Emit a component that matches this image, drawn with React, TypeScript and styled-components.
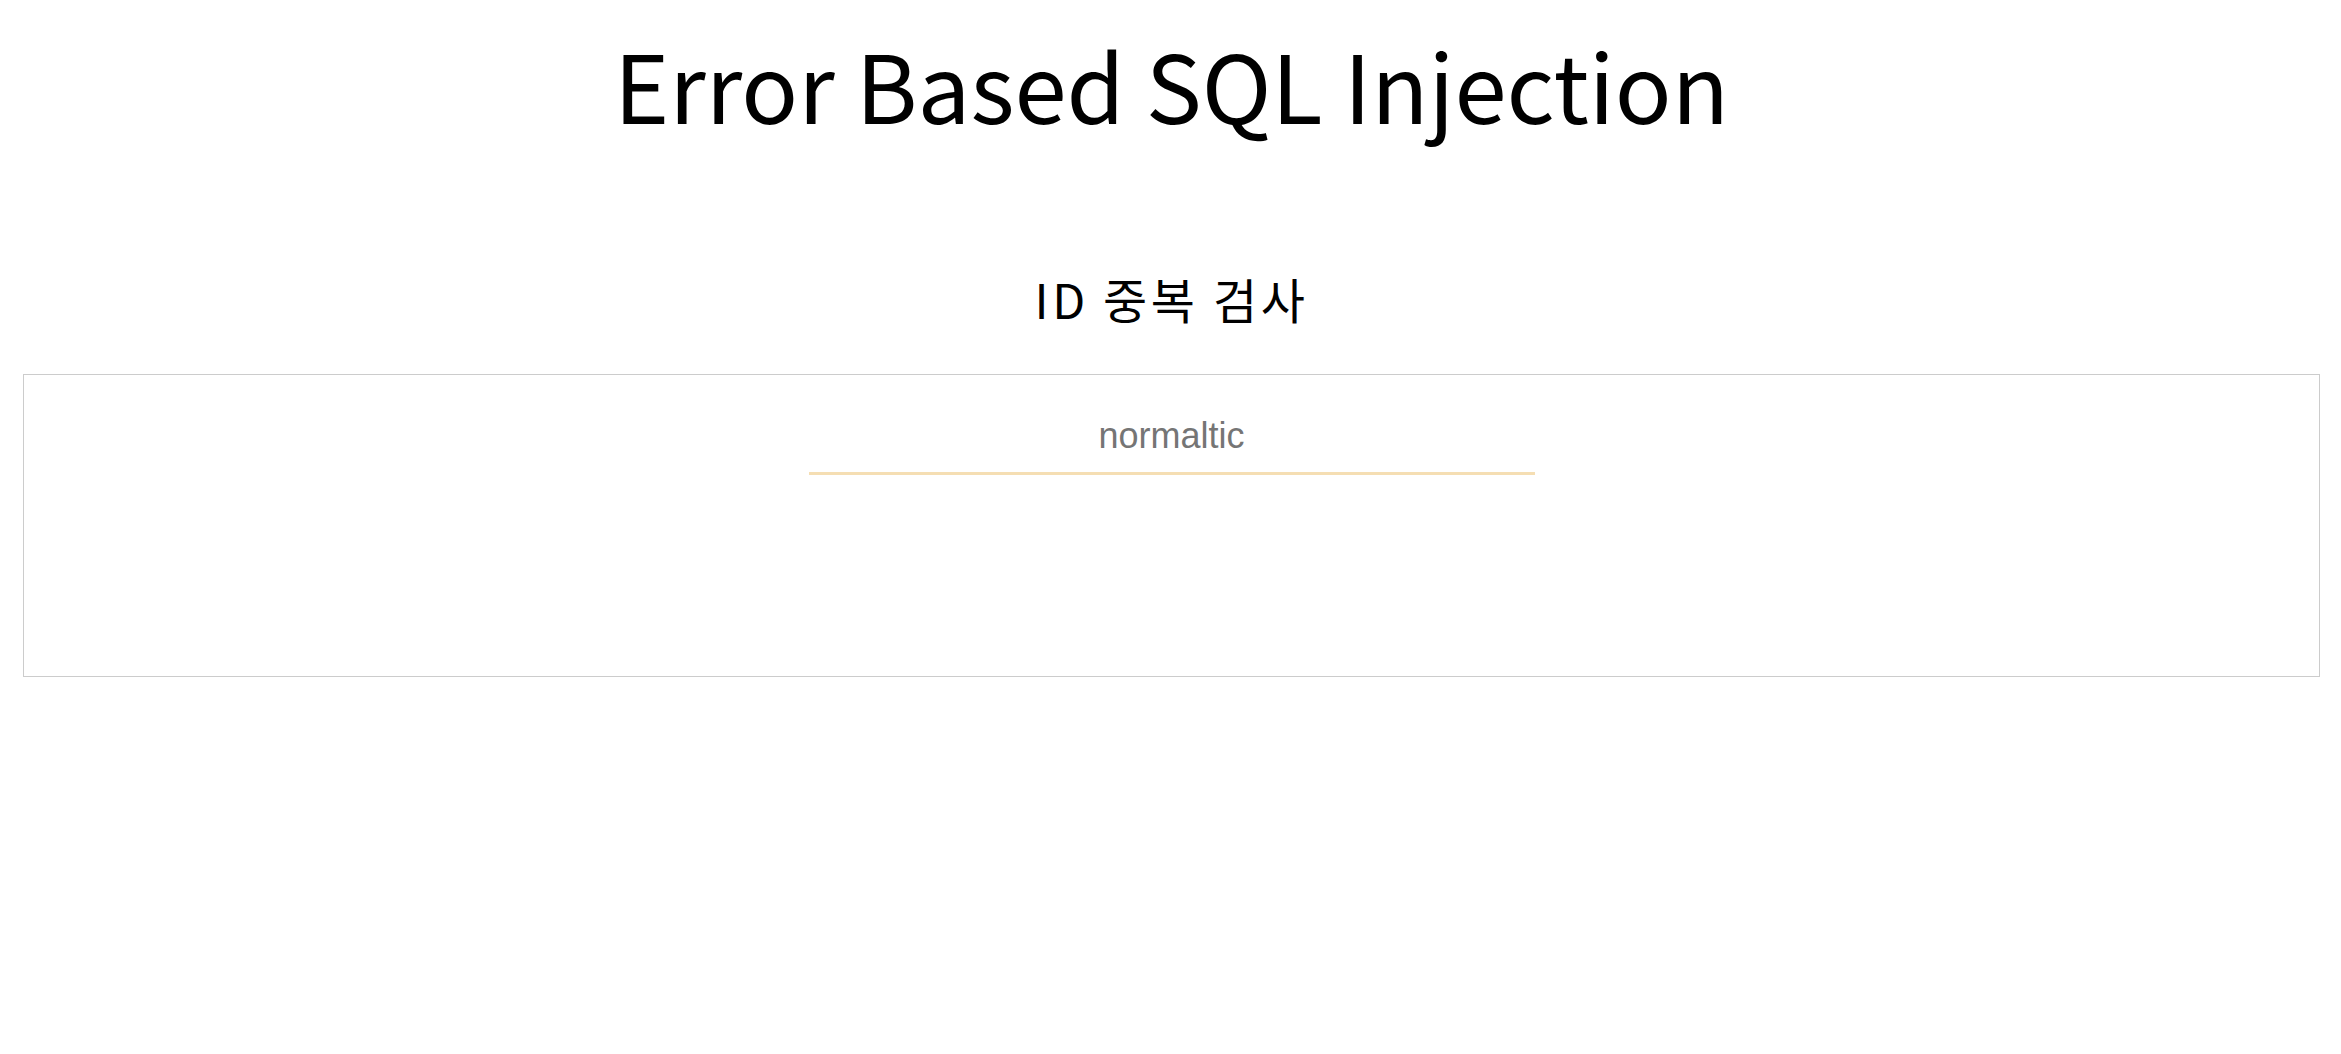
import React from "react";
import styled, { createGlobalStyle } from "styled-components";

const GlobalStyle = createGlobalStyle`
  html, body {
    margin: 0;
    padding: 0;
    background: #ffffff;
  }
  body {
    font-family: "Noto Sans CJK KR", "Noto Sans", sans-serif;
    color: #000000;
  }
`;

const Page = styled.div`
  display: flex;
  flex-direction: column;
  padding: 27px 21px 0 23px;
`;

const Title = styled.h1`
  margin: 0;
  font-family: "Noto Sans CJK KR", "Noto Sans", sans-serif;
  font-size: 94px;
  font-weight: 400;
  line-height: 1.2;
  text-align: center;
`;

const Subtitle = styled.h2`
  margin: 130px 0 0;
  font-family: "Noto Sans CJK KR", "Noto Sans", sans-serif;
  font-size: 48px;
  font-weight: 400;
  line-height: 1.2;
  letter-spacing: 3.6px;
  text-align: center;
`;

const Panel = styled.form`
  margin-top: 47px;
  border: 1px solid #cccccc;
  height: 260px;
  padding-top: 41px;
  display: flex;
  flex-direction: column;
  align-items: center;
`;

const IdInput = styled.input`
  box-sizing: border-box;
  width: 726px;
  height: 59px;
  padding: 0 0 16px;
  border: none;
  border-bottom: 3px solid #f5deb3;
  outline: none;
  background: transparent;
  font-family: "Liberation Sans", Arial, sans-serif;
  font-size: 36px;
  line-height: 40px;
  text-align: center;
  color: #000;

  &::placeholder {
    color: #757575;
  }
`;

export default function App() {
  return (
    <>
      <GlobalStyle />
      <Page>
        <Title>Error Based SQL Injection</Title>
        <Subtitle>ID 중복 검사</Subtitle>
        <Panel onSubmit={(e) => e.preventDefault()}>
          <IdInput type="text" name="id" placeholder="normaltic" />
        </Panel>
      </Page>
    </>
  );
}
